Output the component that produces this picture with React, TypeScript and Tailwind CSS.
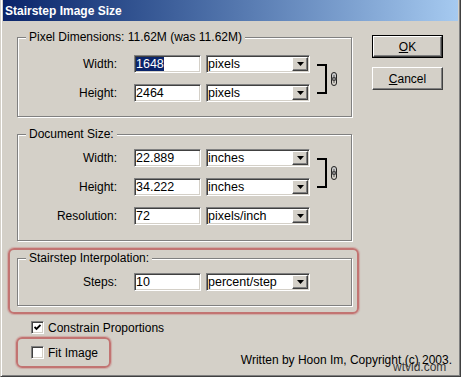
import React from "react";

const sunken =
  "bg-white border border-t-[#808080] border-l-[#808080] border-r-white border-b-white shadow-[inset_1px_1px_0_#404040,inset_-1px_-1px_0_#d4d0c8]";
const raised =
  "bg-[#d4d0c8] border border-t-white border-l-white border-r-[#404040] border-b-[#404040] shadow-[inset_-1px_-1px_0_#808080]";

function Field({ value, selected }: { value: string; selected?: boolean }) {
  return (
    <div className={`${sunken} ml-[17px] w-[67px] h-[18px] flex items-center text-[12.5px]`}>
      {selected ? (
        <span className="ml-[1px] bg-[#0a246a] text-white leading-[14px]">{value}</span>
      ) : (
        <span className="ml-[1px] leading-[14px]">{value}</span>
      )}
    </div>
  );
}

function Select({ value }: { value: string }) {
  return (
    <div className={`${sunken} ml-[5px] w-[104px] h-[18px] flex items-center text-[12.5px]`}>
      <span className="flex-1 pl-[1px] leading-[14px]">{value}</span>
      <div className={`${raised} w-[16px] h-[14px] mr-[1px] flex items-center justify-center`}>
        <svg width="7" height="4" viewBox="0 0 7 4">
          <polygon points="0,0 7,0 3.5,4" fill="#000" />
        </svg>
      </div>
    </div>
  );
}

function Row({ label, value, unit, selected }: { label: string; value: string; unit: string; selected?: boolean }) {
  return (
    <div className="flex items-center h-[18px]">
      <span className="w-[99px] text-right">{label}</span>
      <Field value={value} selected={selected} />
      <Select value={unit} />
    </div>
  );
}

function Link() {
  return (
    <div className="flex items-center">
      <div className="ml-[7px] w-[10px] h-[30px] border-t-2 border-r-2 border-b-2 border-black" />
      <svg className="ml-[3px]" width="8" height="14" viewBox="0 0 8 14">
        <rect x="1.5" y="0.5" width="5" height="8" rx="2.5" fill="#c8c8c8" stroke="#222" />
        <rect x="1.5" y="5.5" width="5" height="8" rx="2.5" fill="none" stroke="#222" />
        <line x1="4" y1="3" x2="4" y2="11" stroke="#555" />
      </svg>
    </div>
  );
}

function Group({ title, className, children }: { title: string; className: string; children: React.ReactNode }) {
  return (
    <div
      className={`relative w-[335px] border border-[#808080] shadow-[inset_1px_1px_0_#fff,1px_1px_0_#fff] ${className}`}
    >
      <span className="absolute -top-[8px] left-[8px] px-[3px] bg-[#d4d0c8] leading-[14px]">{title}</span>
      {children}
    </div>
  );
}

function Check({ on }: { on?: boolean }) {
  return (
    <div className={`${sunken} w-[13px] h-[13px] flex items-center justify-center`}>
      {on && (
        <svg width="7" height="7" viewBox="0 0 7 7">
          <polyline points="0.5,3 2.5,5 6.5,1" fill="none" stroke="#000" strokeWidth="1.8" />
        </svg>
      )}
    </div>
  );
}

export default function App() {
  return (
    <div
      className="relative w-[461px] h-[377px] bg-[#d4d0c8] text-black text-[12px] border-l border-r border-b border-l-[#d4d0c8] border-r-[#404040] border-b-[#404040] shadow-[inset_1px_0_0_#fff,inset_-1px_-1px_0_#808080]"
      style={{ fontFamily: '"Liberation Sans", Arial, sans-serif' }}
    >
      {/* title bar */}
      <div className="mx-[2px] h-[21px] bg-linear-to-r from-[#0a246a] to-[#a6caf0] flex items-center pl-[2px]">
        <span className="text-white font-bold text-[12px]">Stairstep Image Size</span>
      </div>

      <div className="flex">
        {/* left column */}
        <div className="w-[371px] pl-[7px]">
          <Group title="Pixel Dimensions: 11.62M (was 11.62M)" className="ml-[9px] mt-[16px] h-[80px] pt-[17px]">
            <div className="flex items-center">
              <div className="flex flex-col gap-[11px]">
                <Row label="Width:" value="1648" unit="pixels" selected />
                <Row label="Height:" value="2464" unit="pixels" />
              </div>
              <Link />
            </div>
          </Group>

          <Group title="Document Size:" className="ml-[9px] mt-[17px] h-[107px] pt-[14px]">
            <div className="flex flex-col gap-[11px]">
              <div className="flex items-center">
                <div className="flex flex-col gap-[11px]">
                  <Row label="Width:" value="22.889" unit="inches" />
                  <Row label="Height:" value="34.222" unit="inches" />
                </div>
                <Link />
              </div>
              <Row label="Resolution:" value="72" unit="pixels/inch" />
            </div>
          </Group>

          <div className="mt-[7px] w-[351px] border-2 border-[#c27472] rounded-[6px] shadow-[0_0_1px_1px_rgba(200,120,120,0.45)] pl-[7px] pt-[8px] pb-[6px]">
            <Group title="Stairstep Interpolation:" className="h-[48px] pt-[14px]">
              <Row label="Steps:" value="10" unit="percent/step" />
            </Group>
          </div>

          <div className="mt-[7px] ml-[23px] flex items-center h-[13px]">
            <Check on />
            <span className="ml-[4px]">Constrain Proportions</span>
          </div>
        </div>

        {/* right column */}
        <div className="flex flex-col gap-[9px] pt-[14px]">
          <div className="w-[71px] h-[23px] border border-black">
            <div className={`${raised} w-full h-full flex items-center justify-center`}>
              <span>
                <span className="underline">O</span>K
              </span>
            </div>
          </div>
          <div className={`${raised} w-[71px] h-[23px] flex items-center justify-center`}>
            <span>
              <span className="underline">C</span>ancel
            </span>
          </div>
        </div>
      </div>

      {/* bottom row */}
      <div className="mt-[3px] flex items-end justify-between pr-[8px]">
        <div className="ml-[15px] w-[95px] h-[31px] border-2 border-[#c27472] rounded-[6px] shadow-[0_0_1px_1px_rgba(200,120,120,0.45)] flex items-center pl-[13px]">
          <Check />
          <span className="ml-[4px]">Fit Image</span>
        </div>
        <span className="mb-[1px] leading-[14px]">Written by Hoon Im, Copyright (c) 2003.</span>
      </div>

      <span className="absolute left-[392px] top-[360px] text-[12px] leading-[14px] text-[#3a3a3a]">wtvid.com</span>
    </div>
  );
}
